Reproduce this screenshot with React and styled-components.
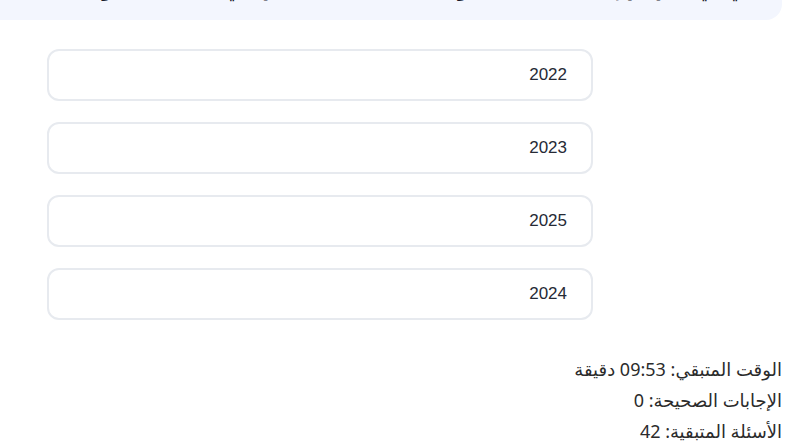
import React from "react";
import styled, { createGlobalStyle } from "styled-components";

const Global = createGlobalStyle`
  html, body { margin: 0; padding: 0; background: #ffffff; overflow: hidden; }
  body { font-family: "Noto Sans", "DejaVu Sans", sans-serif; }
`;

const Page = styled.div`
  direction: rtl;
  width: 800px;
  height: 445px;
  box-sizing: border-box;
  padding-right: 18px;
  display: flex;
  flex-direction: column;
  overflow: hidden;
  & > * { flex-shrink: 0; }
`;

const Header = styled.div`
  margin-top: -42px;
  height: 62px;
  box-sizing: border-box;
  background: #f3f6fe;
  border-bottom-left-radius: 16px;
  border-bottom-right-radius: 16px;
  margin-left: -20px;
  padding: 16px 22px 0 0;
  font-size: 20px;
  font-weight: 700;
  color: #1b1d2e;
  white-space: nowrap;
  overflow: hidden;
  line-height: 30px;
`;

const Options = styled.div`
  display: flex;
  flex-direction: column;
  gap: 21px;
  margin-top: 29px;
  margin-right: 189px;
  width: 546px;
`;

const Option = styled.button`
  direction: rtl;
  flex-shrink: 0;
  height: 52px;
  box-sizing: border-box;
  border: 2px solid #e7eaef;
  border-radius: 12px;
  background: #ffffff;
  text-align: right;
  padding: 0 24px;
  font-family: "Liberation Sans", Arial, sans-serif;
  font-size: 17px;
  color: #262a36;
  cursor: pointer;
`;

const Stats = styled.div`
  margin-top: 34px;
  display: flex;
  flex-direction: column;
  font-size: 18px;
  line-height: 31px;
  color: #2b2b2b;
  text-align: right;
`;

export default function App() {
  const years = ["2022", "2023", "2025", "2024"];
  return (
    <>
      <Global />
      <Page>
        <Header>في أي عام تم إطلاق المنصة الرقمية الجديدة للتعليم في المملكة العربية؟</Header>
        <Options>
          {years.map((y) => (
            <Option key={y}>{y}</Option>
          ))}
        </Options>
        <Stats>
          <div>الوقت المتبقي: 09:53 دقيقة</div>
          <div>الإجابات الصحيحة: 0</div>
          <div>الأسئلة المتبقية: 42</div>
        </Stats>
      </Page>
    </>
  );
}
